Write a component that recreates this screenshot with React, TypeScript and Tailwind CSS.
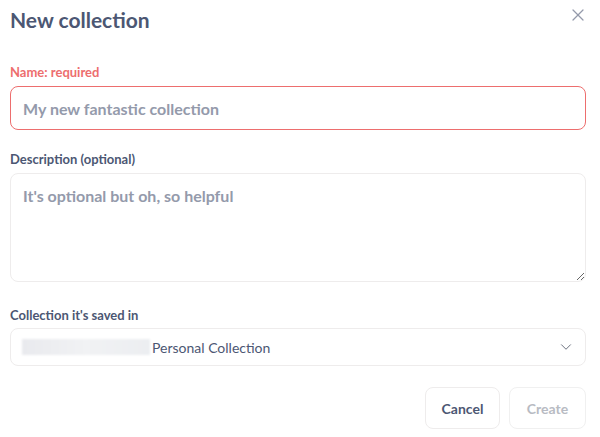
import { ChevronDown, X } from 'lucide-react';

export default function App() {
  return (
    <div className="relative h-[437px] w-[600px] bg-white pl-[10px] pr-[14px] font-['Lato','Noto_Sans',sans-serif] text-[#4c5773]">
      <button className="absolute right-[12px] top-[5px] text-[#949aab]" aria-label="Close">
        <X size={20} strokeWidth={1.5} />
      </button>
      <h2 className="pt-[6px] text-[21px] font-bold leading-[28px] text-[#4c5773]">New collection</h2>

      <div className="mt-[31px]">
        <label className="block text-[13px] font-bold leading-[14px] text-[#ed6e6e]">Name: required</label>
        <input
          className="mt-[7px] h-[44px] w-full rounded-[8px] border border-[#ed6e6e] px-[12px] text-[16px] font-bold text-[#4c5773] outline-none placeholder:text-[#949aab]"
          placeholder="My new fantastic collection"
        />
      </div>

      <div className="mt-[22px]">
        <label className="block text-[13px] font-bold leading-[14px] text-[#4c5773]">Description (optional)</label>
        <textarea
          className="mt-[7px] block h-[109px] w-full resize-y rounded-[8px] border border-[#eeecec] px-[12px] py-[12px] text-[16px] font-bold leading-[20px] text-[#4c5773] outline-none placeholder:text-[#949aab]"
          placeholder="It's optional but oh, so helpful"
        />
      </div>

      <div className="mt-[26px]">
        <label className="block text-[13px] font-bold leading-[14px] text-[#4c5773]">Collection it's saved in</label>
        <div className="mt-[6px] flex h-[38px] w-full items-center rounded-[8px] border border-[#eeecec] pl-[11px] pr-[10px]">
          <span className="h-[16px] w-[128px] bg-gradient-to-r from-[#e9eaee] via-[#f1f2f4] to-[#eceef1] blur-[1px]" />
          <span className="ml-[2px] text-[14px] font-normal text-[#4c5773]">Personal Collection</span>
          <ChevronDown className="ml-auto text-[#696e7b]" size={18} strokeWidth={1.3} />
        </div>
      </div>

      <div className="mt-[21px] flex justify-end gap-[9px]">
        <button className="h-[42px] w-[75px] rounded-[8px] border border-[#eeecec] text-[14px] font-bold text-[#4c5773]">
          Cancel
        </button>
        <button className="h-[42px] w-[77px] rounded-[8px] border border-[#f0f0f0] text-[14px] font-bold text-[#b8bbc3]">
          Create
        </button>
      </div>
    </div>
  );
}
